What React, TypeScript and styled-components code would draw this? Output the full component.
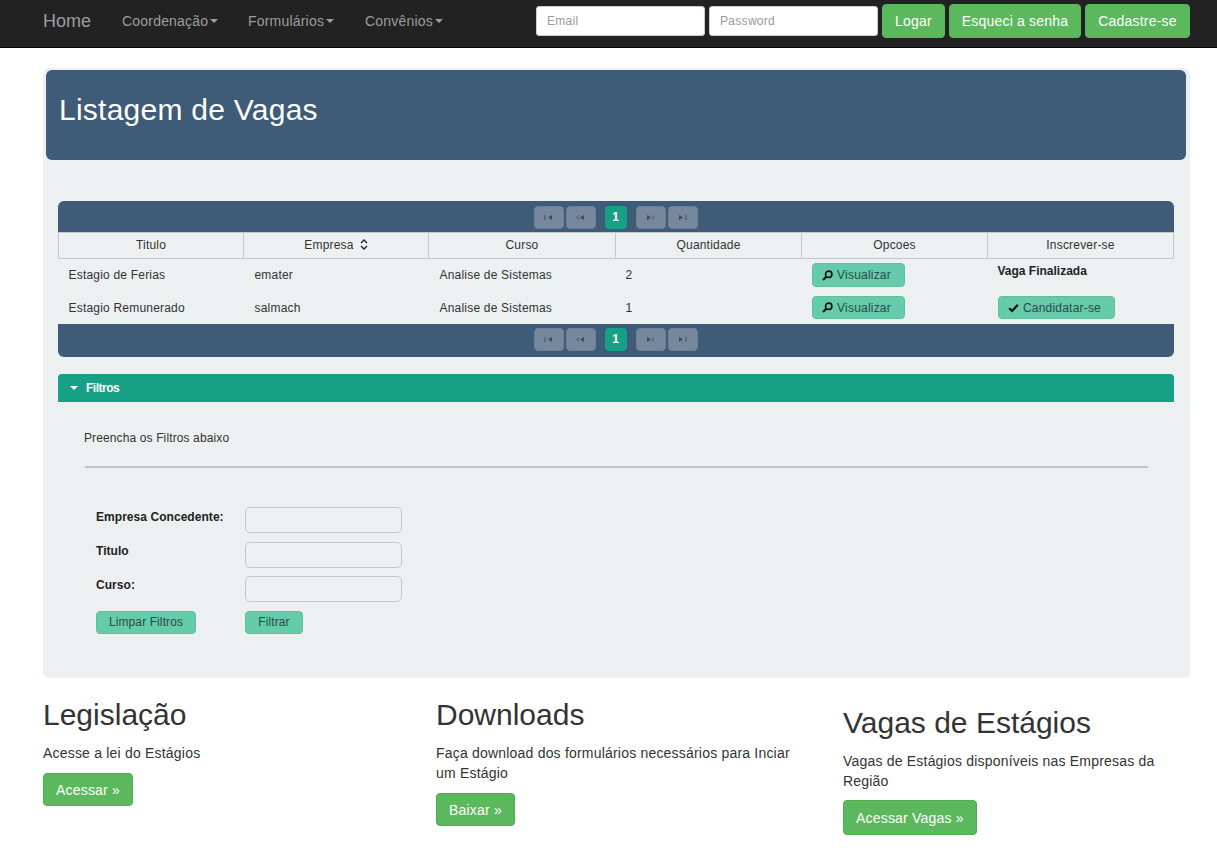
import React from "react";
import styled, { createGlobalStyle } from "styled-components";

const GlobalStyle = createGlobalStyle`
    html, body {
        margin: 0;
        padding: 0;
        background: #fff;
        color: #333;
        font-family: "Liberation Sans", Arial, sans-serif;
        font-size: 14px;
        line-height: 20px;
    }
    * { box-sizing: border-box; }
`;

const Navbar = styled.nav`
    height: 48px;
    background: #222;
    border-bottom: 1px solid #080808;
    padding: 0 27px 0 43px;
    display: flex;
    align-items: flex-start;
    justify-content: space-between;
`;

const NavLeft = styled.div`
    display: flex;
    align-items: center;
    height: 42px;
`;

const Brand = styled.a`
    font-size: 18px;
    color: #9d9d9d;
    width: 79px;
`;

const NavLink = styled.a<{ $width: number }>`
    display: flex;
    align-items: center;
    font-size: 14px;
    letter-spacing: 0.2px;
    color: #9d9d9d;
    width: ${(p) => p.$width}px;
`;

const Caret = styled.span`
    display: inline-block;
    width: 0;
    height: 0;
    margin-left: 2px;
    border-top: 4px solid #9d9d9d;
    border-left: 4px solid transparent;
    border-right: 4px solid transparent;
`;

const NavForm = styled.form`
    display: flex;
    align-items: flex-start;
    gap: 4px;
    padding-top: 4px;
`;

const NavInput = styled.input`
    width: 169px;
    height: 30px;
    margin-top: 2px;
    padding: 0 10px;
    font: 12px "Liberation Sans", Arial, sans-serif;
    letter-spacing: 0.3px;
    background: #fff;
    border: 1px solid #ccc;
    border-radius: 3px;
    &::placeholder { color: #999; opacity: 1; }
`;

const GreenButton = styled.button<{ $wide?: boolean }>`
    height: ${(p) => (p.$wide ? 35 : 33)}px;
    margin-top: ${(p) => (p.$wide ? -1 : 0)}px;
    padding: 0 12px;
    font: 14px "Liberation Sans", Arial, sans-serif;
    letter-spacing: 0.2px;
    color: #fff;
    background: #5cb85c;
    border: 1px solid #4cae4c;
    border-radius: 4px;
`;

const NavButton = styled(GreenButton) <{ $w: number }>`
    width: ${(p) => p.$w}px;
    height: 34px;
    margin-top: 0;
    padding: 0;
    border-color: #5cb85c;
`;

const Page = styled.main`
    padding: 20px 27px 0 43px;
`;

const Jumbotron = styled.section`
    height: 610px;
    background: #ecf0f1;
    border-radius: 6px;
    padding: 2px 4px 0 3px;
`;

const Header = styled.header`
    height: 90px;
    background: #3e5b77;
    border-radius: 6px;
    padding: 20px 13px;
`;

const Title = styled.h1`
    margin: 0;
    font-size: 30px;
    line-height: 40px;
    font-weight: 400;
    letter-spacing: 0.25px;
    color: #fff;
`;

const Content = styled.div`
    padding: 41px 12px 0 12px;
`;

const Pager = styled.div<{ $bottom?: boolean }>`
    height: ${(p) => (p.$bottom ? 33 : 31)}px;
    background: #3e5b77;
    border-radius: ${(p) => (p.$bottom ? "0 0 6px 6px" : "6px 6px 0 0")};
    display: flex;
    justify-content: center;
    padding-top: ${(p) => (p.$bottom ? 4 : 5)}px;
    padding-right: 1px;
    gap: 2px;
`;

const PageIcon = styled.span`
    width: 30px;
    height: 23px;
    background: #77889c;
    border: 1px solid #6d7f94;
    border-radius: 4px;
    display: flex;
    align-items: center;
    justify-content: center;
`;

const PageCurrent = styled.span`
    width: 22px;
    height: 23px;
    margin: 0 7px;
    background: #16a085;
    border-radius: 4px;
    color: #fff;
    font-size: 12px;
    font-weight: 700;
    line-height: 22px;
    text-align: center;
`;

const Table = styled.table`
    width: calc(100% - 1px);
    table-layout: fixed;
    border-collapse: collapse;
    font-size: 12px;
    letter-spacing: 0.2px;
`;

const HeadCell = styled.th<{ $w: number }>`
    width: ${(p) => p.$w}px;
    height: 26px;
    padding: 0 0 2px;
    font-weight: 400;
    color: #333;
    text-align: center;
    border: 1px solid #c4c8ca;
`;

const Cell = styled.td<{ $h: number }>`
    height: ${(p) => p.$h}px;
    padding: 0 10px;
    color: #333;
    vertical-align: middle;
    &:nth-child(2), &:nth-child(3) { padding-left: 11px; }
`;

const FinishedCell = styled(Cell)`
    vertical-align: top;
    padding-top: 2px;
    font-weight: 700;
    letter-spacing: 0;
    color: #222;
`;

const ActionButton = styled.button<{ $w: number; $h?: number; $icon?: boolean }>`
    width: ${(p) => p.$w}px;
    height: ${(p) => p.$h ?? 23}px;
    padding: 0 ${(p) => (p.$icon ? 3 : 0)}px 0 0;
    display: inline-flex;
    align-items: center;
    justify-content: center;
    gap: 4px;
    font: 12px "Liberation Sans", Arial, sans-serif;
    letter-spacing: ${(p) => (p.$icon ? 0.2 : 0.1)}px;
    color: #2c4a4a;
    background: #65cba9;
    border: 1px solid #5fbda0;
    border-radius: 4px;
    vertical-align: middle;
`;

const SortIcon = styled.svg`
    margin-left: 6px;
    vertical-align: -1px;
`;

const FilterBar = styled.div`
    margin-top: 17px;
    height: 28px;
    padding-left: 12px;
    display: flex;
    align-items: center;
    gap: 8px;
    background: #16a085;
    border-radius: 4px 4px 0 0;
    color: #fff;
    font-size: 12px;
    font-weight: 700;
    letter-spacing: -0.5px;
`;

const FilterCaret = styled.span`
    width: 0;
    height: 0;
    border-top: 4px solid #fff;
    border-left: 4px solid transparent;
    border-right: 4px solid transparent;
`;

const FilterBody = styled.div`
    padding: 25px 26px 0 27px;
`;

const FilterHint = styled.p`
    margin: 1px 0 0 -1px;
    font-size: 12px;
    letter-spacing: 0.12px;
    color: #333;
`;

const Rule = styled.hr`
    margin: 18px 0 0;
    height: 2px;
    border: 0;
    background: #c3c6c7;
`;

const FilterForm = styled.form`
    margin: 40px 0 0 11px;
    display: grid;
    grid-template-columns: 149px 157px;
    grid-auto-rows: 34px;
`;

const FieldLabel = styled.label`
    font-size: 12px;
    font-weight: 700;
    letter-spacing: 0.05px;
    color: #222;
    line-height: 18px;
`;

const FieldInput = styled.input<{ $lift?: boolean }>`
    width: 157px;
    height: 26px;
    margin-top: ${(p) => (p.$lift ? -1 : 0)}px;
    background: transparent;
    border: 1px solid #c4c8ca;
    border-radius: 5px;
`;

const FormActions = styled.div`
    padding-top: 1px;
`;

const Columns = styled.div`
    display: grid;
    grid-template-columns: 393px 407px 347px;
    margin-top: 22px;
`;

const Column = styled.article<{ $offset?: number; $wrap: number }>`
    padding-top: ${(p) => p.$offset ?? 0}px;
    max-width: ${(p) => p.$wrap}px;
`;

const ColumnTitle = styled.h2`
    margin: 0 0 12px;
    font-size: 30px;
    line-height: 31px;
    font-weight: 400;
    color: #333;
    transform: translateY(-1px);
`;

const ColumnText = styled.p`
    margin: 0 0 10px;
    letter-spacing: 0.2px;
`;

function EdgeIcon({ dir }: { dir: "first" | "prev" | "next" | "last" }) {
    const forward = dir === "next" || dir === "last";
    const edge = dir === "first" || dir === "last";
    return (
        <svg width="9" height="5" viewBox="0 0 9 5" style={{ transform: forward ? "scaleX(-1)" : undefined }}>
            {edge ? (
                <rect x="0.5" y="0" width="1" height="5" fill="#35506b" />
            ) : (
                <path d="M3 0.5L0.8 2.5L3 4.5" fill="none" stroke="#35506b" strokeWidth="0.9" />
            )}
            <path d="M8 0L4 2.5L8 5Z" fill="#35506b" />
        </svg>
    );
}

function Pagination({ bottom }: { bottom?: boolean }) {
    return (
        <Pager $bottom={bottom}>
            <PageIcon><EdgeIcon dir="first" /></PageIcon>
            <PageIcon><EdgeIcon dir="prev" /></PageIcon>
            <PageCurrent>1</PageCurrent>
            <PageIcon><EdgeIcon dir="next" /></PageIcon>
            <PageIcon><EdgeIcon dir="last" /></PageIcon>
        </Pager>
    );
}

function SearchGlyph() {
    return (
        <svg width="11" height="11" viewBox="0 0 11 11">
            <circle cx="6.7" cy="4.3" r="3.2" fill="none" stroke="#111" strokeWidth="1.6" />
            <path d="M4.3 6.7L1 10" stroke="#111" strokeWidth="2" />
        </svg>
    );
}

function CheckGlyph() {
    return (
        <svg width="11" height="10" viewBox="0 0 11 10">
            <path d="M1.2 5.2L4.1 8L9.8 1.8" fill="none" stroke="#111" strokeWidth="2.2" />
        </svg>
    );
}

const rows = [
    { titulo: "Estagio de Ferias", empresa: "emater", curso: "Analise de Sistemas", qtd: 2, finalizada: true, h: 33 },
    { titulo: "Estagio Remunerado", empresa: "salmach", curso: "Analise de Sistemas", qtd: 1, finalizada: false, h: 32 },
];

export default function App() {
    return (
        <>
            <GlobalStyle />
            <Navbar>
                <NavLeft>
                    <Brand>Home</Brand>
                    <NavLink $width={126}>Coordenação<Caret /></NavLink>
                    <NavLink $width={117}>Formulários<Caret /></NavLink>
                    <NavLink $width={90}>Convênios<Caret /></NavLink>
                </NavLeft>
                <NavForm>
                    <NavInput placeholder="Email" />
                    <NavInput placeholder="Password" />
                    <NavButton type="button" $w={63}>Logar</NavButton>
                    <NavButton type="button" $w={132}>Esqueci a senha</NavButton>
                    <NavButton type="button" $w={105}>Cadastre-se</NavButton>
                </NavForm>
            </Navbar>
            <Page>
                <Jumbotron>
                    <Header>
                        <Title>Listagem de Vagas</Title>
                    </Header>
                    <Content>
                        <Pagination />
                        <Table>
                            <thead>
                                <tr>
                                    <HeadCell $w={185}>Titulo</HeadCell>
                                    <HeadCell $w={185}>
                                        Empresa
                                        <SortIcon width="8" height="11" viewBox="0 0 8 11">
                                            <path d="M1 4L4 1L7 4M1 7L4 10L7 7" fill="none" stroke="#222" strokeWidth="1.4" />
                                        </SortIcon>
                                    </HeadCell>
                                    <HeadCell $w={187}>Curso</HeadCell>
                                    <HeadCell $w={186}>Quantidade</HeadCell>
                                    <HeadCell $w={186}>Opcoes</HeadCell>
                                    <HeadCell $w={186}>Inscrever-se</HeadCell>
                                </tr>
                            </thead>
                            <tbody>
                                {rows.map((r) => (
                                    <tr key={r.titulo}>
                                        <Cell $h={r.h}>{r.titulo}</Cell>
                                        <Cell $h={r.h}>{r.empresa}</Cell>
                                        <Cell $h={r.h}>{r.curso}</Cell>
                                        <Cell $h={r.h}>{r.qtd}</Cell>
                                        <Cell $h={r.h}>
                                            <ActionButton type="button" $icon $w={93} $h={r.finalizada ? 24 : 23}>
                                                <SearchGlyph />Visualizar
                                            </ActionButton>
                                        </Cell>
                                        {r.finalizada ? (
                                            <FinishedCell $h={r.h}>Vaga Finalizada</FinishedCell>
                                        ) : (
                                            <Cell $h={r.h}>
                                                <ActionButton type="button" $icon $w={117}>
                                                    <CheckGlyph />Candidatar-se
                                                </ActionButton>
                                            </Cell>
                                        )}
                                    </tr>
                                ))}
                            </tbody>
                        </Table>
                        <Pagination bottom />
                        <FilterBar><FilterCaret />Filtros</FilterBar>
                        <FilterBody>
                            <FilterHint>Preencha os Filtros abaixo</FilterHint>
                            <Rule />
                            <FilterForm>
                                <FieldLabel>Empresa Concedente:</FieldLabel>
                                <FieldInput $lift />
                                <FieldLabel>Titulo</FieldLabel>
                                <FieldInput />
                                <FieldLabel>Curso:</FieldLabel>
                                <FieldInput />
                                <FormActions>
                                    <ActionButton type="button" $w={100}>Limpar Filtros</ActionButton>
                                </FormActions>
                                <FormActions>
                                    <ActionButton type="button" $w={58}>Filtrar</ActionButton>
                                </FormActions>
                            </FilterForm>
                        </FilterBody>
                    </Content>
                </Jumbotron>
                <Columns>
                    <Column $wrap={360}>
                        <ColumnTitle>Legislação</ColumnTitle>
                        <ColumnText>Acesse a lei do Estágios</ColumnText>
                        <GreenButton type="button">Acessar »</GreenButton>
                    </Column>
                    <Column $wrap={360}>
                        <ColumnTitle>Downloads</ColumnTitle>
                        <ColumnText>Faça download dos formulários necessários para Inciar um Estágio</ColumnText>
                        <GreenButton type="button">Baixar »</GreenButton>
                    </Column>
                    <Column $offset={8} $wrap={347}>
                        <ColumnTitle>Vagas de Estágios</ColumnTitle>
                        <ColumnText>Vagas de Estágios disponíveis nas Empresas da Região</ColumnText>
                        <GreenButton type="button" $wide>Acessar Vagas »</GreenButton>
                    </Column>
                </Columns>
            </Page>
        </>
    );
}
